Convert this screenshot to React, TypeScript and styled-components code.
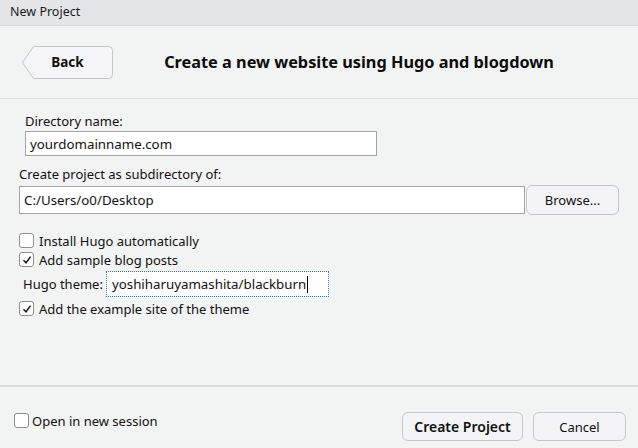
import styled, { createGlobalStyle } from 'styled-components';

const GlobalStyle = createGlobalStyle`
  html, body {
    margin: 0;
    padding: 0;
    background: #f2f3f3;
  }
  body {
    font-family: 'Noto Sans', 'Open Sans', sans-serif;
    font-size: 13px;
    color: #111;
  }
`;

interface CheckProps {
  checked?: boolean;
}

const Check = ({ checked }: CheckProps) => (
  <StyledCheckBox>
    {checked && (
      <svg width="12" height="12" viewBox="0 0 12 12">
        <path d="M2.5 6.3 L5 8.8 L9.6 2.6" fill="none" stroke="#1a1a1a" strokeWidth="1.5" />
      </svg>
    )}
  </StyledCheckBox>
);

const App = () => {
  return (
    <StyledWindow>
      <GlobalStyle />
      <StyledTitleBar>New Project</StyledTitleBar>

      <StyledHeader>
        <StyledBackButton>
          <svg width="91" height="33" viewBox="0 0 91 33">
            <path
              d="M11.5 0.5 H86.5 Q90.5 0.5 90.5 4.5 V28.5 Q90.5 32.5 86.5 32.5 H11.5 L0.5 16.5 Z"
              fill="#f5f5f7"
              stroke="#c6c6c8"
            />
          </svg>
          <span>Back</span>
        </StyledBackButton>
        <StyledH2>Create a new website using Hugo and blogdown</StyledH2>
      </StyledHeader>

      <StyledForm>
        <StyledGroup $indent={6}>
          <StyledLabel>Directory name:</StyledLabel>
          <StyledField $width={352} $height={25}>
            yourdomainname.com
          </StyledField>
        </StyledGroup>

        <StyledGroup $indent={0} $top={10}>
          <StyledLabel>Create project as subdirectory of:</StyledLabel>
          <StyledPathRow>
            <StyledField $width={506} $height={28}>
              C:/Users/o0/Desktop
            </StyledField>
            <StyledButton $width={93} $height={30}>
              Browse...
            </StyledButton>
          </StyledPathRow>
        </StyledGroup>

        <StyledChecks>
          <StyledCheckRow>
            <Check />
            Install Hugo automatically
          </StyledCheckRow>
          <StyledCheckRow>
            <Check checked />
            Add sample blog posts
          </StyledCheckRow>
          <StyledThemeRow>
            <span>Hugo theme:</span>
            <StyledField $width={223} $height={26} $focus>
              yoshiharuyamashita/blackburn
              <StyledCaret />
            </StyledField>
          </StyledThemeRow>
          <StyledCheckRow>
            <Check checked />
            Add the example site of the theme
          </StyledCheckRow>
        </StyledChecks>
      </StyledForm>

      <StyledFooter>
        <StyledSessionRow>
          <Check />
          Open in new session
        </StyledSessionRow>
        <StyledActions>
          <StyledButton $width={121} $height={29} $bold>
            Create Project
          </StyledButton>
          <StyledButton $width={93} $height={29}>
            Cancel
          </StyledButton>
        </StyledActions>
      </StyledFooter>
    </StyledWindow>
  );
};

export default App;

const StyledWindow = styled.div`
  width: 638px;
  height: 448px;
  display: flex;
  flex-direction: column;
  background: #f2f3f3;
  overflow: hidden;
`;

const StyledTitleBar = styled.div`
  box-sizing: border-box;
  height: 26px;
  line-height: 24px;
  padding-left: 10px;
  background: #e4e5e8;
  border-bottom: 1px solid #d9dadd;
  font-size: 12.5px;
  color: #1b1b1b;
`;

const StyledHeader = styled.div`
  box-sizing: border-box;
  height: 73px;
  display: flex;
  align-items: center;
  padding-left: 22px;
  border-bottom: 1px solid #dcdddd;
`;

const StyledBackButton = styled.button`
  position: relative;
  width: 91px;
  height: 33px;
  padding: 0;
  border: none;
  background: none;
  font-family: inherit;

  svg {
    position: absolute;
    top: 0;
    left: 0;
  }

  span {
    position: relative;
    display: block;
    font-size: 13.5px;
    font-weight: 700;
    color: #111;
  }
`;

const StyledH2 = styled.h2`
  flex: 1;
  margin: 0;
  padding-right: 33px;
  text-align: center;
  font-size: 16.3px;
  font-weight: 700;
  color: #0c0c0c;
`;

const StyledForm = styled.div`
  flex: 1;
  display: flex;
  flex-direction: column;
  padding: 14px 0 0 19px;
`;

const StyledGroup = styled.div<{ $indent: number; $top?: number }>`
  display: flex;
  flex-direction: column;
  gap: 2px;
  margin-left: ${(p) => p.$indent}px;
  margin-top: ${(p) => p.$top ?? 0}px;
`;

const StyledLabel = styled.div`
  height: 16px;
  line-height: 16px;
`;

const StyledField = styled.div<{ $width: number; $height: number; $focus?: boolean }>`
  box-sizing: border-box;
  width: ${(p) => p.$width}px;
  height: ${(p) => p.$height}px;
  display: flex;
  align-items: center;
  padding-left: ${(p) => (p.$focus ? 5 : 4)}px;
  background: #fff;
  border: ${(p) => (p.$focus ? '1px dotted #2f6fd0' : '1px solid #a3a3a3')};
  white-space: nowrap;
  font-size: 13.3px;
  color: #111;
`;

const StyledCaret = styled.span`
  display: inline-block;
  width: 1px;
  height: 17px;
  margin-left: 1px;
  background: #000;
`;

const StyledPathRow = styled.div`
  display: flex;
  align-items: center;
  gap: 1px;
  margin-top: 1px;
`;

const StyledButton = styled.button<{ $width: number; $height: number; $bold?: boolean }>`
  box-sizing: border-box;
  width: ${(p) => p.$width}px;
  height: ${(p) => p.$height}px;
  padding: 0;
  background: #f4f4f6;
  border: 1px solid #c6c6c8;
  border-radius: 6px;
  font-family: inherit;
  font-size: ${(p) => (p.$bold ? '14px' : '13px')};
  font-weight: ${(p) => (p.$bold ? 600 : 400)};
  color: #111;
`;

const StyledChecks = styled.div`
  display: flex;
  flex-direction: column;
  margin-top: 16px;
`;

const StyledCheckRow = styled.div`
  height: 19px;
  display: flex;
  align-items: center;
  gap: 5px;
`;

const StyledThemeRow = styled.div`
  height: 26px;
  display: flex;
  align-items: center;
  gap: 3px;
  padding-left: 4px;
  margin: 2px 0;
`;

const StyledCheckBox = styled.span`
  box-sizing: border-box;
  width: 15px;
  height: 15px;
  display: inline-flex;
  align-items: center;
  justify-content: center;
  flex-shrink: 0;
  background: #fff;
  border: 1px solid #8f8f8f;
  border-radius: 3px;
`;

const StyledFooter = styled.div`
  box-sizing: border-box;
  height: 63px;
  display: flex;
  align-items: flex-end;
  justify-content: space-between;
  padding: 0 12px 7px 14px;
  border-top: 2px solid #dcdcdc;
`;

const StyledSessionRow = styled.div`
  height: 19px;
  display: flex;
  align-items: center;
  gap: 3px;
  margin-bottom: 11px;
`;

const StyledActions = styled.div`
  display: flex;
  gap: 10px;
`;
